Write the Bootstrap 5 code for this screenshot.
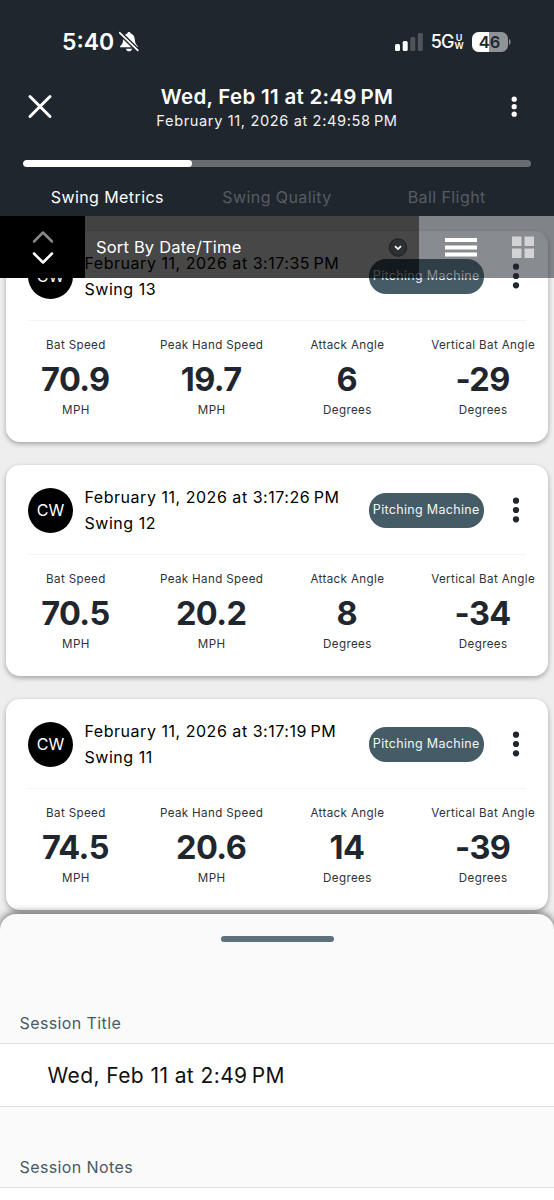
<!DOCTYPE html>
<html lang="en">
<head>
<meta charset="utf-8">
<meta name="viewport" content="width=device-width, initial-scale=1">
<title>Swing Metrics</title>
<link href="https://cdn.jsdelivr.net/npm/bootstrap@5.3.0/dist/css/bootstrap.min.css" rel="stylesheet">
<style>
  body { font-family: Inter, "Liberation Sans", sans-serif; background: #eee; color: #000; }
  .screen { width: 554px; height: 1200px; }
  .topbar { height: 216px; background: #1f262e; color: #fff; }
  .statusbar { height: 82px; padding: 1px 43.5px 0 62px; }
  .clock { font-size: 23px; font-weight: 600; line-height: 24px; }
  .carrier { font-size: 18px; font-weight: 500; line-height: 20px; letter-spacing: -.9px; }
  .carrier-sub { width: 9px; font-size: 9px; font-weight: 600; line-height: 8px; margin-left: 1px; }
  .battery { width: 36px; height: 20px; margin-left: 8px; border-radius: 6.5px; color: #1f262e; font-size: 16.5px; font-weight: 600; line-height: 20px; background: linear-gradient(90deg, #fff 46%, #8f9397 46%); }
  .titlebar { height: 52px; }
  .title-main { font-size: 20.5px; font-weight: 600; line-height: 26px; letter-spacing: .3px; }
  .title-sub { font-size: 14.6px; line-height: 22px; letter-spacing: .62px; color: #f1f2f3; }
  .session-progress { height: 7px; margin: 26px 23px 19px; background: #696c70; border-radius: 4px; }
  .session-progress .progress-bar { background: #fff; border-radius: 4px; }
  .tabs { font-size: 16px; line-height: 22px; letter-spacing: .42px; color: #575c62; margin: 0 22.5px; }
  .swings { padding: 15px 6px 0; height: 698px; }
  .swing { height: 211px; margin-bottom: 23px; border: 0; border-radius: 14px; box-shadow: 0 2px 5px rgba(0,0,0,.32); color: #000; }
  .swing-head { height: 90px; margin: 0 22px; padding-top: 1px; border-bottom: 1px solid #f4f4f4; }
  .avatar { width: 45px; height: 45px; background: #000; color: #fff; font-size: 16px; }
  .stamp { font-size: 16px; line-height: 26px; letter-spacing: .53px; padding-left: 11.5px; white-space: nowrap; }
  .tag { width: 114.5px; height: 35px; border-radius: 17px; background: #455b65; color: #f4f6f7; font-size: 12.5px; letter-spacing: .32px; }
  .kebab { margin: 0 1.5px 0 23px; }
  .metrics { margin: 0 -3px 0 2px; padding-top: 15px; color: #1f262e; text-align: center; }
  .cap { font-size: 11.6px; line-height: 18px; letter-spacing: .37px; white-space: nowrap; color: #2c3238; }
  .num { font-size: 32.5px; font-weight: 700; line-height: 40px; letter-spacing: -.6px; margin: 6px 0 1px -1px; }
  .sortbar { top: 216px; left: 0; height: 62px; z-index: 2; color: #fff; }
  .sort-dir { width: 84.5px; padding-left: 1px; background: #000; }
  .sort-by { width: 334px; background: rgba(0,0,0,.72); padding: 0 10.5px 0 11.5px; font-size: 16.5px; letter-spacing: .18px; }
  .view-mode { width: 135.5px; background: rgba(31,38,46,.53); padding: 0 20px 0 26.5px; }
  .sheet { height: 286px; padding-top: 22px; background: #fafafa; border-radius: 16px 16px 0 0; box-shadow: 0 -1px 8px rgba(0,0,0,.6); z-index: 3; }
  .grip { width: 113px; height: 6px; border-radius: 3px; background: #5d727b; margin-bottom: 70px; }
  .field-label { font-size: 16px; line-height: 22px; letter-spacing: .4px; padding-left: 19.5px; margin-bottom: 9px; color: #465a65; }
  .field-value { height: 64px; margin-bottom: 49px; padding-top: 2px; background: #fff; border: solid #dedede; border-width: 1px 0; padding-left: 47.5px; font-size: 21px; letter-spacing: .41px; color: #111; }
</style>
</head>
<body>
<div class="screen position-relative overflow-hidden d-flex flex-column">
  <header class="topbar flex-shrink-0">
    <div class="statusbar d-flex align-items-center">
      <span class="clock">5:40</span>
      <svg class="ms-1" width="22" height="22" viewBox="0 0 22 22"><path d="M2 16.200c0-1.500 2.600-2.400 2.900-5.600.3-4 1.300-7.300 4.400-8.100.2-1 .8-1.500 1.700-1.500s1.500.5 1.700 1.500c3.100.8 4.100 4.100 4.400 8.100.3 3.200 2.900 4.100 2.900 5.600z M7.800 17.700h6.400c-.3 1.500-1.600 2.600-3.200 2.600s-2.900-1.100-3.200-2.600z" fill="#fff"/><path d="M1.800 1.800l18 17.500" stroke="#1f262e" stroke-width="4.600"/><path d="M1.800 1.800l18 17.500" stroke="#fff" stroke-width="1.800" stroke-linecap="round"/></svg>
      <svg class="ms-auto" width="28" height="18" viewBox="0 0 28 18"><rect y="11" width="5" height="7" rx="1.500" fill="#fff"/><rect x="7.700" y="8" width="5" height="10" rx="1.500" fill="#fff"/><rect x="15.300" y="4" width="5" height="14" rx="1.500" fill="#50555b"/><rect x="22.800" width="5" height="18" rx="1.500" fill="#50555b"/></svg>
      <span class="carrier ms-2">5G</span>
      <span class="carrier-sub d-flex flex-column align-items-center"><span>U</span><span>W</span></span>
      <span class="battery text-center">46</span>
      <svg width="3" height="8" viewBox="0 0 3 8"><path d="M1 1c2 1 2 5 0 6z" fill="#8f9397"/></svg>
    </div>
    <div class="titlebar d-flex justify-content-between align-items-center">
      <svg width="80" height="52" viewBox="0 0 80 52"><path d="M30 14.500l20 20M50 14.500l-20 20" stroke="#fff" stroke-width="3" stroke-linecap="round"/></svg>
      <div class="text-center">
        <div class="title-main">Wed, Feb 11 at 2:49&#8239;PM</div>
        <div class="title-sub">February 11, 2026 at 2:49:58&#8239;PM</div>
      </div>
      <svg width="80" height="52" viewBox="0 0 80 52" fill="#fff"><circle cx="40.200" cy="17.200" r="2.600"/><circle cx="40.200" cy="24.700" r="2.600"/><circle cx="40.200" cy="32.200" r="2.600"/></svg>
    </div>
    <div class="progress session-progress"><div class="progress-bar" style="width:33.3%"></div></div>
    <nav class="tabs row g-0 text-center">
      <div class="col text-white">Swing Metrics</div>
      <div class="col">Swing Quality</div>
      <div class="col">Ball Flight</div>
    </nav>
  </header>

  <div class="sortbar position-absolute w-100 d-flex">
    <div class="sort-dir d-flex align-items-center justify-content-center">
      <svg width="22" height="34" viewBox="0 0 22 34" fill="none" stroke-width="2.500" stroke-linecap="round" stroke-linejoin="round"><path d="M2 11.500l9-9 9 9" stroke="#888"/><path d="M2 23.500l9 9 9-9" stroke="#fff"/></svg>
    </div>
    <div class="sort-by d-flex align-items-center justify-content-between"><span>Sort By Date/Time</span>
      <svg width="20" height="20" viewBox="0 0 20 20"><circle cx="10" cy="10.500" r="8.700" fill="#2d2f31" stroke="#1d1f20"/><path d="M7 9.100l3 3 3-3" fill="none" stroke="#fff" stroke-width="1.700"/></svg>
    </div>
    <div class="view-mode d-flex align-items-center justify-content-between">
      <svg width="32" height="20" viewBox="0 0 32 20" fill="#fff"><path d="M0 1h32v4H0zM0 8.500h32v4H0zM0 15.500h32v4H0z"/></svg>
      <svg width="22" height="22" viewBox="0 0 22 22" fill="#d2d3d4"><path d="M0 .5h9.500V10H0zM12.500 .5H22V10h-9.500zM0 12.500h9.500V22H0zM12.500 12.500H22V22h-9.500z"/></svg>
    </div>
  </div>

  <main class="swings flex-shrink-0" id="swings"></main>

  <section class="sheet flex-shrink-0 position-relative">
    <div class="grip mx-auto"></div>
    <div class="field-label">Session Title</div>
    <div class="field-value d-flex align-items-center">Wed, Feb 11 at 2:49&#8239;PM</div>
    <div class="field-label">Session Notes</div>
    <div class="field-value"></div>
  </section>
</div>
<script>
  const swings = [
    { n: 13, t: "3:17:35", v: ["70.9", "19.7", "6", "-29"] },
    { n: 12, t: "3:17:26", v: ["70.5", "20.2", "8", "-34"] },
    { n: 11, t: "3:17:19", v: ["74.5", "20.6", "14", "-39"] }
  ];
  const caps = ["Bat Speed", "Peak Hand Speed", "Attack Angle", "Vertical Bat Angle"];
  const units = ["MPH", "MPH", "Degrees", "Degrees"];
  document.getElementById("swings").innerHTML = swings.map(s => `
    <article class="card swing">
      <div class="swing-head d-flex align-items-center">
        <div class="avatar rounded-circle d-flex align-items-center justify-content-center">CW</div>
        <div class="stamp flex-grow-1"><div>February 11, 2026 at ${s.t}&#8239;PM</div><div>Swing ${s.n}</div></div>
        <div class="tag d-flex align-items-center justify-content-center">Pitching Machine</div>
        <svg class="kebab" width="18" height="30" viewBox="0 0 18 30" fill="#1f262e"><circle cx="9" cy="5.700" r="3.100"/><circle cx="9" cy="15" r="3.100"/><circle cx="9" cy="24.300" r="3.100"/></svg>
      </div>
      <div class="metrics row g-0">${s.v.map((v, i) => `
        <div class="col"><div class="cap">${caps[i]}</div><div class="num">${v}</div><div class="cap">${units[i]}</div></div>`).join("")}
      </div>
    </article>`).join("");
</script>
<script src="https://cdn.jsdelivr.net/npm/bootstrap@5.3.0/dist/js/bootstrap.bundle.min.js"></script>
</body>
</html>
